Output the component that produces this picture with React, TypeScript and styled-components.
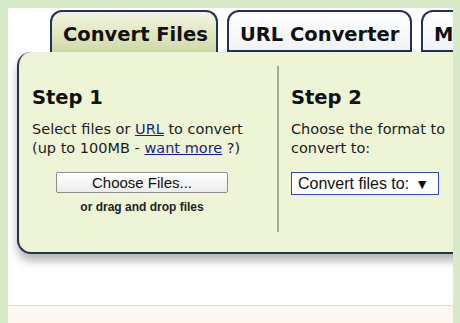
import React from 'react';
import styled, {createGlobalStyle} from 'styled-components';

const GlobalStyle = createGlobalStyle`
  html, body {
    margin: 0;
    padding: 0;
    background: #d7eac8;
  }
  body {
    font-family: "DejaVu Sans", Verdana, sans-serif;
  }
`

const Page = styled.div`
  width: 460px;
  height: 323px;
  box-sizing: border-box;
  padding: 7px 7px 0 8px;
  overflow: hidden;
`
const Frame = styled.div`
  height: 316px;
  background: #fff;
  border-top: 1px solid #e6d8f0;
  overflow: hidden;
  display: flex;
  flex-direction: column;
`
const TabRow = styled.div`
  display: flex;
  gap: 9px;
  padding: 2px 0 0 42px;
  height: 42px;
  white-space: nowrap;
`
const Tab = styled.div<{ $active?: boolean; $width: number }>`
  flex: 0 0 ${p => p.$width}px;
  box-sizing: border-box;
  border: 2px solid #23305a;
  border-bottom: ${p => (p.$active ? 'none' : '2px solid #23305a')};
  border-radius: 12px 12px 0 0;
  background: ${p => (p.$active
    ? 'linear-gradient(#f2f5e2 0%, #e0e7bf 55%, #cfd9a6 100%)'
    : 'linear-gradient(#ffffff, #f1f3f8)')};
  font-weight: 700;
  font-size: 19.5px;
  color: #111;
  padding: 11px 0 0 11px;
  overflow: hidden;
`
const Panel = styled.div`
  margin-left: 9px;
  margin-right: -20px;
  height: 202px;
  box-sizing: border-box;
  background: #eef5d7;
  border-left: 2px solid #26324f;
  border-bottom: 2px solid #26324f;
  border-radius: 14px 0 0 14px;
  box-shadow: 0 7px 8px rgba(40, 50, 60, 0.35);
  display: flex;
  padding: 14px 0 0;
`
const Column = styled.div<{ $divider?: boolean; $width?: number }>`
  ${p => (p.$width ? `flex: 0 0 ${p.$width}px;` : 'flex: 1;')}
  box-sizing: border-box;
  padding: 0 0 0 ${p => (p.$divider ? 12 : 13)}px;
  border-left: ${p => (p.$divider ? '2px solid #a5ab98' : 'none')};
  height: 166px;
`
const StepTitle = styled.h2`
  margin: 19px 0 9px;
  font-size: 19.5px;
  font-weight: 700;
  color: #111;
  line-height: 26px;
`
const Desc = styled.p`
  margin: 0;
  font-size: 14.5px;
  line-height: 19px;
  color: #1c1c1c;
`
const Link = styled.a`
  color: #1a1f8a;
  text-decoration: underline;
`
const UploadBox = styled.div`
  display: flex;
  flex-direction: column;
  align-items: center;
  width: 220px;
  margin-top: 14px;
`
const ChooseButton = styled.button`
  width: 172px;
  height: 21px;
  padding: 0;
  font-family: "Liberation Sans", Arial, sans-serif;
  font-size: 15px;
  color: #111;
  background: linear-gradient(#ffffff, #ececec);
  border: 1px solid #8d8d8d;
  border-radius: 2px;
`
const DropHint = styled.div`
  margin-top: 7px;
  font-family: "Liberation Sans", Arial, sans-serif;
  font-size: 12px;
  font-weight: 700;
  color: #222;
`
const FormatSelect = styled.div`
  margin-top: 14px;
  width: 148px;
  height: 23px;
  box-sizing: border-box;
  border: 1px solid #3546b8;
  background: #fff;
  display: flex;
  align-items: center;
  justify-content: space-between;
  padding: 0 9px 0 6px;
  font-family: "Liberation Sans", Arial, sans-serif;
  font-size: 16px;
  color: #111;
`
const Arrow = styled.span`
  font-size: 14px;
`
const Bottom = styled.div`
  flex: 1;
  display: flex;
  flex-direction: column;
  justify-content: flex-end;
`
const PeachStrip = styled.div`
  height: 18px;
  border-top: 1px solid #f6d6dc;
  background: #fff6f0;
`

const App = () => {
    return (
        <>
            <GlobalStyle/>
            <Page>
                <Frame>
                    <TabRow>
                        <Tab $active $width={168}>Convert Files</Tab>
                        <Tab $width={185}>URL Converter</Tab>
                        <Tab $width={80}>M</Tab>
                    </TabRow>
                    <Panel>
                        <Column $width={258}>
                            <StepTitle>Step 1</StepTitle>
                            <Desc>
                                Select files or <Link href="#">URL</Link> to convert<br/>
                                (up to 100MB - <Link href="#">want more</Link> ?)
                            </Desc>
                            <UploadBox>
                                <ChooseButton>Choose Files...</ChooseButton>
                                <DropHint>or drag and drop files</DropHint>
                            </UploadBox>
                        </Column>
                        <Column $divider>
                            <StepTitle>Step 2</StepTitle>
                            <Desc>
                                Choose the format to<br/>
                                convert to:
                            </Desc>
                            <FormatSelect>
                                Convert files to:
                                <Arrow>▼</Arrow>
                            </FormatSelect>
                        </Column>
                    </Panel>
                    <Bottom>
                        <PeachStrip/>
                    </Bottom>
                </Frame>
            </Page>
        </>
    );
};

export default App;
